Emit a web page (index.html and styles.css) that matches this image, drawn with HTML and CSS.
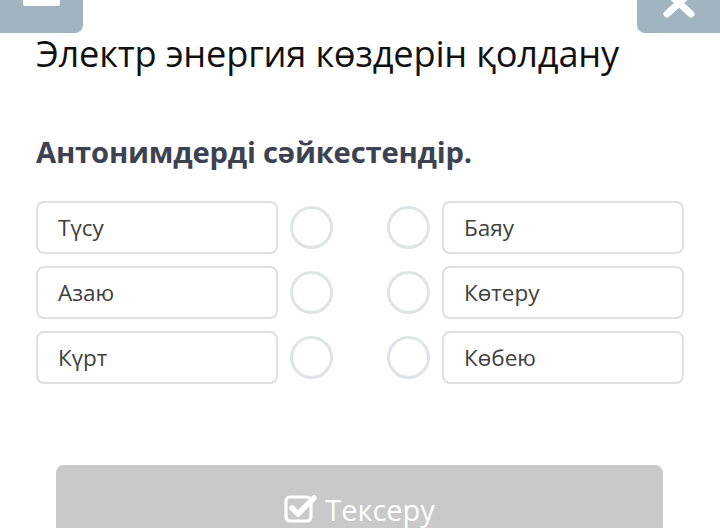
FILE: index.html
```html
<!DOCTYPE html>
<html lang="kk">
<head>
<meta charset="utf-8">
<link rel="stylesheet" href="styles.css">
</head>
<body>
<div class="topbar">
  <div class="tab tab-left"><span class="burger"></span></div>
  <div class="tab tab-right">
    <svg class="close" width="32" height="20" viewBox="0 0 32 20"><path d="M4 -8 L28 14 M28 -8 L4 14" stroke="#fff" stroke-width="7" stroke-linecap="round"/></svg>
  </div>
</div>
<main class="page">
  <h1 class="title">Электр энергия көздерін қолдану</h1>
  <h2 class="question">Антонимдерді сәйкестендір.</h2>
  <div class="match">
    <div class="row"><div class="item">Түсу</div><span class="dot"></span><span class="dot"></span><div class="item">Баяу</div></div>
    <div class="row"><div class="item">Азаю</div><span class="dot"></span><span class="dot"></span><div class="item">Көтеру</div></div>
    <div class="row"><div class="item">Күрт</div><span class="dot"></span><span class="dot"></span><div class="item">Көбею</div></div>
  </div>
  <div class="btn-wrap">
    <button class="check-btn">
      <svg class="chk" width="33" height="30" viewBox="0 0 33 30"><rect x="2" y="4" width="25" height="24" rx="4" fill="none" stroke="#fff" stroke-width="3.2"/><path d="M8 15 L14 21 L30 5" fill="none" stroke="#fff" stroke-width="5.5" stroke-linecap="round" stroke-linejoin="round"/></svg>
      <span>Тексеру</span>
    </button>
  </div>
</main>
</body>
</html>
```
FILE: styles.css
```css
html, body {
  margin: 0;
  padding: 0;
  background: #fff;
  font-family: "Open Sans", "Noto Sans", sans-serif;
  width: 720px;
  height: 528px;
  overflow: hidden;
}
.topbar {
  display: flex;
  justify-content: space-between;
  height: 33px;
}
.tab {
  width: 83px;
  height: 33px;
  background: #a2b4c0;
  position: relative;
  overflow: hidden;
}
.tab-left { border-radius: 0 0 8px 0; }
.tab-right { border-radius: 0 0 0 8px; }
.burger {
  position: absolute;
  left: 23px;
  top: 0;
  width: 37px;
  height: 6px;
  background: #fff;
  border-radius: 0 0 2px 2px;
}
.close {
  position: absolute;
  left: 26px;
  top: 0;
}
.page {
  padding: 0 36px;
}
.title {
  margin: 0;
  font-weight: 400;
  font-size: 36.2px;
  line-height: 40px;
  color: #111;
  letter-spacing: -0.2px;
}
.question {
  margin: 61px 0 0;
  font-weight: 700;
  font-size: 29.2px;
  line-height: 36px;
  color: #3c4250;
  letter-spacing: -0.2px;
}
.match {
  margin-top: 31px;
  display: flex;
  flex-direction: column;
  gap: 12px;
}
.row {
  display: flex;
  align-items: center;
  height: 53px;
}
.item {
  box-sizing: border-box;
  width: 242px;
  height: 53px;
  border: 2px solid #e0e0e0;
  border-radius: 8px;
  padding-left: 20px;
  font-size: 22.5px;
  line-height: 49px;
  color: #404040;
}
.dot {
  box-sizing: border-box;
  width: 43px;
  height: 43px;
  border: 3px solid #dfe4e7;
  border-radius: 50%;
  margin-left: 12px;
}
.dot + .dot { margin-left: 54px; }
.dot + .item { margin-left: 12px; }
.btn-wrap {
  margin-top: 81px;
  padding: 0 20px;
}
.check-btn {
  width: 607px;
  height: 80px;
  border: none;
  background: #c9c9c9;
  border-radius: 8px;
  display: flex;
  align-items: flex-start;
  justify-content: center;
  gap: 8px;
  padding: 25px 0 0;
  font-family: inherit;
  font-size: 29px;
  color: #fff;
}
.check-btn span { line-height: 40px; }
.chk { margin-top: 3px; }
```
